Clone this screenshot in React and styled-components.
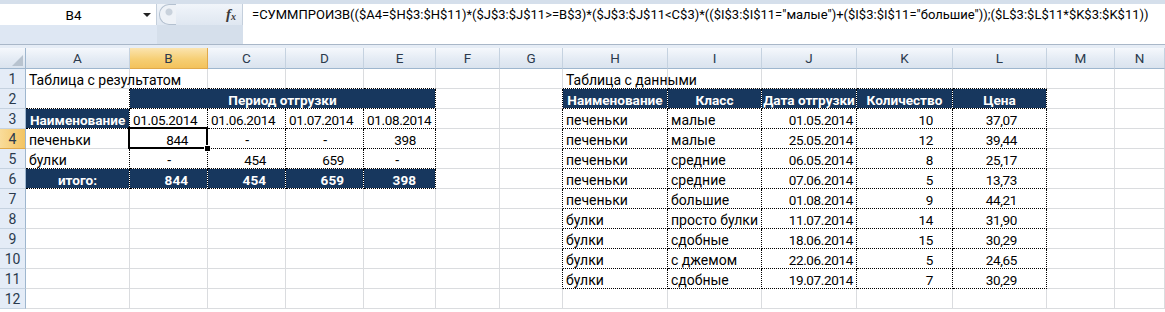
import React from 'react'
import styled, { createGlobalStyle, css } from 'styled-components'

const GlobalStyle = createGlobalStyle`
  html, body {
    margin: 0;
    padding: 0;
    background: #ffffff;
    overflow: hidden;
  }
`

const COLS = [
  ['A', 104], ['B', 78], ['C', 78], ['D', 78], ['E', 72], ['F', 64], ['G', 63],
  ['H', 105], ['I', 94], ['J', 95], ['K', 96], ['L', 94], ['M', 68], ['N', 50],
]
const ROW_COUNT = 12
const SELECTED = { col: 'B', row: 4 }

const FORMULA =
  '=СУММПРОИЗВ(($A4=$H$3:$H$11)*($J$3:$J$11>=B$3)*($J$3:$J$11<C$3)*(($I$3:$I$11="малые")+($I$3:$I$11="большие"));($L$3:$L$11*$K$3:$K$11))'

// cell content; kind decides alignment, padding and look
const cells = {
  A1: { t: 'Таблица с результатом' },
  B2: { t: 'Период отгрузки', kind: 'head', span: 4 },
  A3: { t: 'Наименование', kind: 'headLeft' },
  B3: { t: '01.05.2014', kind: 'dateLeft' },
  C3: { t: '01.06.2014', kind: 'dateLeft' },
  D3: { t: '01.07.2014', kind: 'dateLeft' },
  E3: { t: '01.08.2014', kind: 'dateLeft' },
  A4: { t: 'печеньки' },
  B4: { t: '844', kind: 'num' },
  C4: { t: '-', kind: 'dash' },
  D4: { t: '-', kind: 'dash' },
  E4: { t: '398', kind: 'num' },
  A5: { t: 'булки' },
  B5: { t: '-', kind: 'dash' },
  C5: { t: '454', kind: 'num' },
  D5: { t: '659', kind: 'num' },
  E5: { t: '-', kind: 'dash' },
  A6: { t: 'итого:', kind: 'head' },
  B6: { t: '844', kind: 'totalNum' },
  C6: { t: '454', kind: 'totalNum' },
  D6: { t: '659', kind: 'totalNum' },
  E6: { t: '398', kind: 'totalNum' },
  H1: { t: 'Таблица с данными' },
  H2: { t: 'Наименование', kind: 'head' },
  I2: { t: 'Класс', kind: 'head' },
  J2: { t: 'Дата отгрузки', kind: 'head' },
  K2: { t: 'Количество', kind: 'head' },
  L2: { t: 'Цена', kind: 'head' },
}

const dataRows = [
  ['печеньки', 'малые', '01.05.2014', '10', '37,07'],
  ['печеньки', 'малые', '25.05.2014', '12', '39,44'],
  ['печеньки', 'средние', '06.05.2014', '8', '25,17'],
  ['печеньки', 'средние', '07.06.2014', '5', '13,73'],
  ['печеньки', 'большие', '01.08.2014', '9', '44,21'],
  ['булки', 'просто булки', '11.07.2014', '14', '31,90'],
  ['булки', 'сдобные', '18.06.2014', '15', '30,29'],
  ['булки', 'с джемом', '22.06.2014', '5', '24,65'],
  ['булки', 'сдобные', '19.07.2014', '7', '30,29'],
]
dataRows.forEach((row, i) => {
  const r = i + 3
  cells['H' + r] = { t: row[0] }
  cells['I' + r] = { t: row[1] }
  cells['J' + r] = { t: row[2], kind: 'date' }
  cells['K' + r] = { t: row[3], kind: 'num' }
  cells['L' + r] = { t: row[4], kind: 'price' }
})

// which cells have the dotted table border
const boxed = (r, c) => {
  if (c < 0 || c >= COLS.length) return false
  if (r >= 2 && r <= 6 && c >= 1 && c <= 4) return true
  if ((r === 3 || r === 6) && c === 0) return true
  if (r >= 2 && r <= 11 && c >= 7 && c <= 11) return true
  return false
}

const KIND = {
  text: { align: 'left', pad: '0 0 0 3px' },
  dateLeft: { align: 'left', pad: '0 0 0 3px', numeric: true },
  date: { align: 'right', pad: '0 3px 0 0', numeric: true },
  num: { align: 'right', pad: '0 19px 0 0', numeric: true },
  dash: { align: 'right', pad: '0 36px 0 0' },
  price: { align: 'right', pad: '0 29px 0 0', numeric: true },
  head: { align: 'center', pad: '0', dark: true },
  headLeft: { align: 'left', pad: '0 0 0 4px', dark: true },
  totalNum: { align: 'right', pad: '0 19px 0 0', dark: true },
}

const App = () => {
  const rows = []
  for (let r = 1; r <= ROW_COUNT; r++) {
    rows.push(
      <RowHead key={'h' + r} $active={r === SELECTED.row}>{r}</RowHead>
    )
    let skip = 0
    COLS.forEach(([name], c) => {
      if (skip > 0) {
        skip--
        return
      }
      const cell = cells[name + r]
      const span = cell?.span || 1
      skip = span - 1
      const kind = KIND[cell?.kind || 'text']
      const lastCol = c + span - 1
      const dotRight = boxed(r, lastCol) || boxed(r, lastCol + 1)
      const dotBottom = boxed(r, c) || boxed(r + 1, c)
      rows.push(
        <Cell
          key={name + r}
          $span={span}
          $align={kind.align}
          $pad={kind.pad}
          $dark={kind.dark}
          $numeric={kind.numeric}
          $dotRight={dotRight}
          $dotBottom={dotBottom}
          $selected={name === SELECTED.col && r === SELECTED.row}
        >
          {cell?.t}
        </Cell>
      )
    })
  }

  return (
    <Window>
      <GlobalStyle />
      <FormulaBar>
        <NameArea>
          <NameBox>
            <NameText>B4</NameText>
            <DropArrow />
          </NameBox>
        </NameArea>
        <FxArea>
          <Grip />
          <Fx>
            f<sub>x</sub>
          </Fx>
        </FxArea>
        <FormulaInput>{FORMULA}</FormulaInput>
      </FormulaBar>
      <BarGap />
      <Sheet>
        <Corner>
          <svg width="11" height="11" viewBox="0 0 11 11">
            <polygon points="11,0 11,11 0,11" fill="#b8c3cf" />
          </svg>
        </Corner>
        {COLS.map(([name]) => (
          <ColHead key={name} $active={name === SELECTED.col}>{name}</ColHead>
        ))}
        {rows}
      </Sheet>
    </Window>
  )
}

const Window = styled.div`
  width: 1165px;
  height: 312px;
  overflow: hidden;
  background: #ffffff;
  font-family: Roboto, 'Noto Sans', sans-serif;
`

const FormulaBar = styled.div`
  display: flex;
  height: 45px;
  box-sizing: border-box;
  padding-top: 4px;
  background: #d5dfeb;
  border-bottom: 1px solid #a9b7c8;
`

const NameArea = styled.div`
  width: 157px;
  display: flex;
  flex-direction: column;
  background: #dee7f3;
`

const NameBox = styled.div`
  height: 21px;
  display: flex;
  align-items: center;
  background: #ffffff;
  border-right: 1px solid #c4cfdc;
`

const NameText = styled.span`
  flex: 1;
  text-align: center;
  font-size: 13.5px;
  color: #000;
  padding-left: 4px;
`

const DropArrow = styled.span`
  width: 0;
  height: 0;
  margin-right: 5px;
  border-left: 4px solid transparent;
  border-right: 4px solid transparent;
  border-top: 4px solid #222;
`

const FxArea = styled.div`
  width: 86px;
  height: 21px;
  display: flex;
  align-items: center;
  justify-content: space-between;
  background: linear-gradient(#f1f5fa, #dfe7f1);
  border-right: 1px solid #c4cfdc;
  box-sizing: border-box;
`

const Grip = styled.span`
  width: 16px;
  height: 19px;
  margin-left: 2px;
  border-radius: 10px 0 0 10px;
  border: 1px solid #b4c1d0;
  border-right: none;
  background: radial-gradient(circle at 9px 7px, #c9d2dc 0 3px, #eef2f7 4px);
`

const Fx = styled.span`
  font-family: 'Liberation Serif', serif;
  font-style: italic;
  font-weight: bold;
  font-size: 15px;
  color: #3a3a3a;
  margin-right: 6px;
  sub {
    font-size: 10px;
    vertical-align: baseline;
    position: relative;
    top: 1px;
  }
`

const FormulaInput = styled.div`
  flex: 1;
  background: #ffffff;
  font-size: 13px;
  color: #000;
  padding: 3px 0 0 9px;
  white-space: nowrap;
  overflow: hidden;
`

const BarGap = styled.div`
  height: 3px;
  background: #e6edf6;
`

const Sheet = styled.div`
  display: grid;
  grid-template-columns: 26px ${COLS.map(([, w]) => w + 'px').join(' ')};
  grid-template-rows: 21px;
  grid-auto-rows: 20px;
  background: #ffffff;
`

const headBase = css`
  box-sizing: border-box;
  display: flex;
  align-items: center;
  justify-content: center;
  font-size: 13.5px;
  color: #2b3a4d;
  background: ${(p) =>
    p.$active
      ? 'linear-gradient(#fbe4b0, #f6cf75 55%, #f3c25c)'
      : 'linear-gradient(#f5f8fc, #e4ebf4 55%, #dae3ee)'};
`

const Corner = styled.div`
  ${headBase}
  justify-content: flex-end;
  align-items: flex-end;
  padding: 0 2px 2px 0;
  border-right: 1px solid #9eb6ce;
  border-bottom: 1px solid #9eb6ce;
`

const ColHead = styled.div`
  ${headBase}
  border-right: 1px solid ${(p) => (p.$active ? '#e0a94b' : '#c5d2e0')};
  border-bottom: 1px solid ${(p) => (p.$active ? '#e0a94b' : '#9eb6ce')};
`

const RowHead = styled.div`
  ${headBase}
  font-size: 14px;
  background: ${(p) =>
    p.$active ? 'linear-gradient(90deg, #f9dc9a, #f3c462)' : '#e4ecf7'};
  border-right: 1px solid #9eb6ce;
  border-bottom: 1px solid ${(p) => (p.$active ? '#e0a94b' : '#c5d2e0')};
`

const Cell = styled.div`
  position: relative;
  box-sizing: border-box;
  grid-column: span ${(p) => p.$span};
  display: flex;
  align-items: center;
  justify-content: ${(p) =>
    p.$align === 'right' ? 'flex-end' : p.$align === 'center' ? 'center' : 'flex-start'};
  padding: ${(p) => p.$pad};
  padding-top: 2px;
  font-size: ${(p) => (p.$dark ? '13.6px' : p.$numeric ? '13.5px' : '14px')};
  letter-spacing: ${(p) => (p.$numeric ? '-0.35px' : 'normal')};
  white-space: nowrap;
  overflow: visible;
  color: ${(p) => (p.$dark ? '#ffffff' : '#000000')};
  font-weight: ${(p) => (p.$dark ? 700 : 400)};
  background: ${(p) => (p.$dark ? '#17375e' : 'transparent')};
  background-clip: padding-box;
  border-right: 1px ${(p) => (p.$dotRight ? 'dotted #000' : 'solid #dadcdf')};
  border-bottom: 1px ${(p) => (p.$dotBottom ? 'dotted #000' : 'solid #dadcdf')};

  ${(p) =>
    p.$selected &&
    css`
      &::after {
        content: '';
        position: absolute;
        left: -2px;
        top: -2px;
        right: -1px;
        bottom: -1px;
        border: 2px solid #000;
        pointer-events: none;
      }
      &::before {
        content: '';
        position: absolute;
        right: -4px;
        bottom: -4px;
        width: 5px;
        height: 5px;
        background: #000;
        border: 1px solid #fff;
        z-index: 1;
      }
    `}
`

export default App
